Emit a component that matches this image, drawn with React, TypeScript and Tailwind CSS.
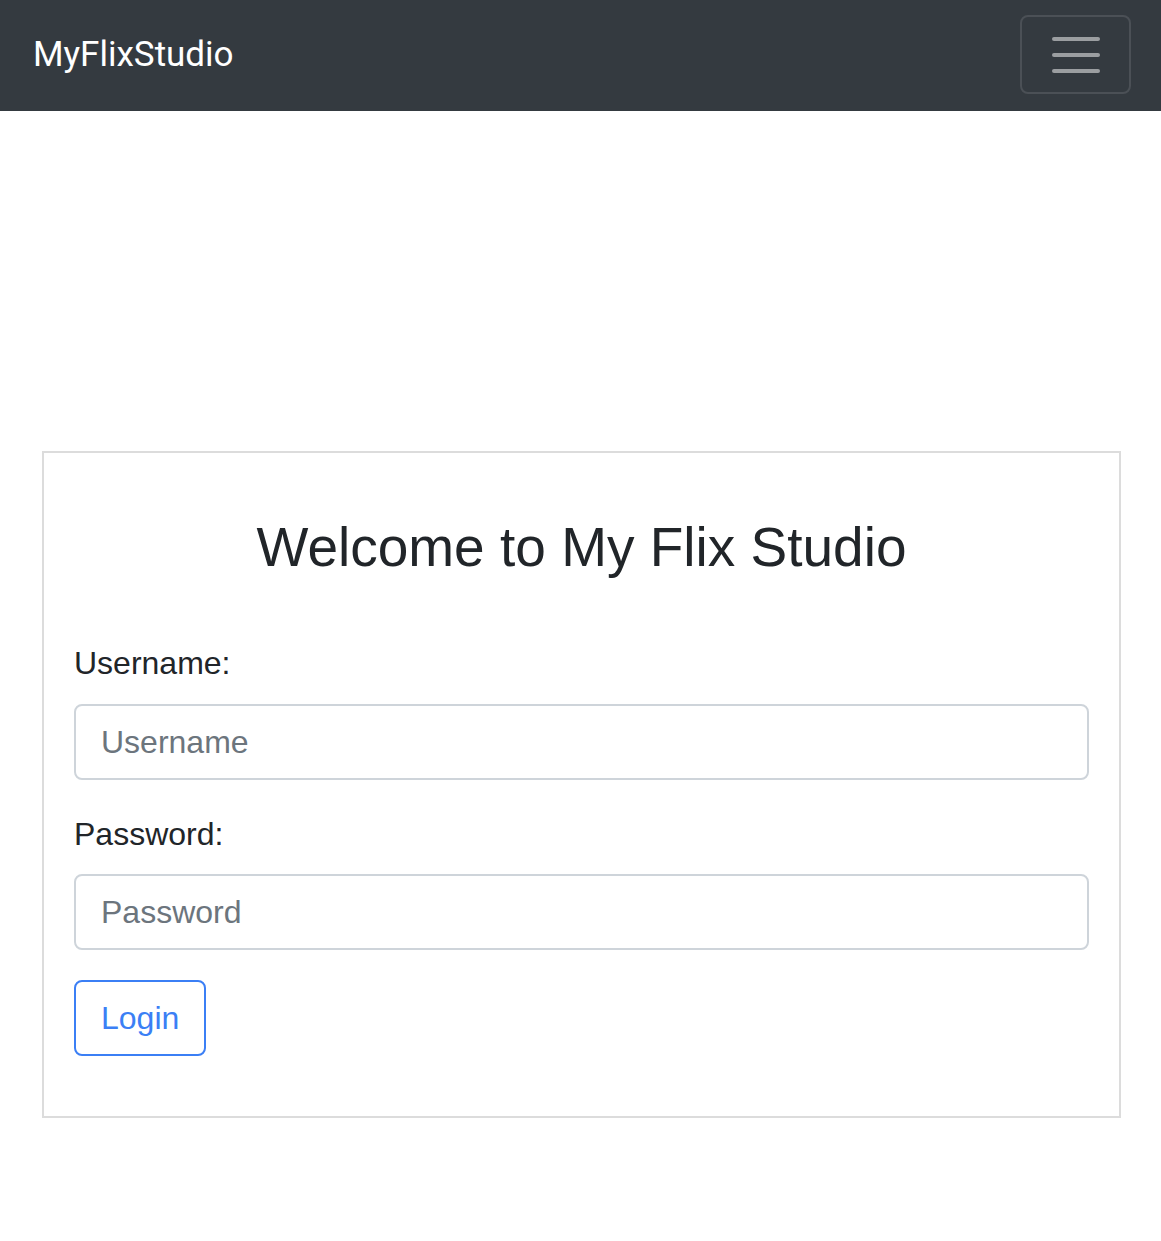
import React from "react";

export default function App() {
  return (
    <div className="min-h-[1241px] bg-white" style={{ fontFamily: '"Liberation Sans", Arial, sans-serif' }}>
      <nav className="h-[111px] bg-[#343a40] flex items-center justify-between pl-[33px] pr-[30px]">
        <span className="text-white text-[35px] leading-none font-[Roboto,sans-serif] pb-[2px]">MyFlixStudio</span>
        <button className="w-[111px] h-[79px] mt-[-2px] rounded-[8px] border-2 border-[#4b5056] flex flex-col items-center justify-center gap-[12px]">
          <span className="block w-[48px] h-[4px] rounded-full bg-[#9b9ea1]" />
          <span className="block w-[48px] h-[4px] rounded-full bg-[#9b9ea1]" />
          <span className="block w-[48px] h-[4px] rounded-full bg-[#9b9ea1]" />
        </button>
      </nav>
      <div className="pt-[340px] pl-[42px] pr-[40px]">
        <div className="border-2 border-[#dcdcdc] px-[30px] pt-[58px] pb-[60px]">
          <h1 className="text-center text-[55px] leading-[72px] text-[#212529] font-normal mb-[56px]">
            Welcome to My Flix Studio
          </h1>
          <label className="block text-[32px] leading-[48px] text-[#212529] mb-[17px]">Username:</label>
          <input
            className="block w-full h-[76px] border-2 border-[#ced4da] rounded-[8px] px-[25px] text-[32px] text-[#212529] placeholder:text-[#6c757d] outline-none"
            placeholder="Username"
          />
          <label className="block text-[32px] leading-[48px] text-[#212529] mt-[30px] mb-[16px]">Password:</label>
          <input
            type="password"
            className="block w-full h-[76px] border-2 border-[#ced4da] rounded-[8px] px-[25px] text-[32px] text-[#212529] placeholder:text-[#6c757d] outline-none"
            placeholder="Password"
          />
          <button className="mt-[30px] h-[76px] px-[25px] border-2 border-[#3b7ff5] rounded-[8px] text-[32px] text-[#3b7ff5]">
            Login
          </button>
        </div>
      </div>
    </div>
  );
}
